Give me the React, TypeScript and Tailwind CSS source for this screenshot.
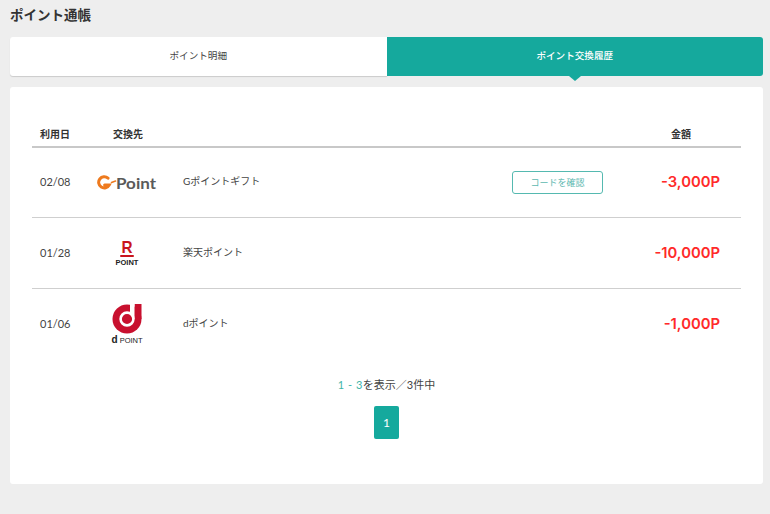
const font = "font-['Lato','Noto_Sans_CJK_JP',sans-serif]"

const GPointLogo = () => (
  <svg width="60" height="18" viewBox="0 0 60 18" aria-label="G-Point">
    <path d="M11 4.2A5.6 5.6 0 1 0 12.2 11H7.6" fill="none" stroke="#ee7a1e" strokeWidth="3" strokeLinecap="round" />
    <path d="M14.5 8.5l4-1.4" fill="none" stroke="#ee7a1e" strokeWidth="1.6" strokeLinecap="round" />
    <text x="19" y="15" fontFamily="Lato, sans-serif" fontWeight="700" fontSize="16" fill="#5a5a5a" textLength="40" lengthAdjust="spacingAndGlyphs">Point</text>
  </svg>
)

const RPointLogo = () => (
  <div className="flex flex-col items-center mt-[2px]">
    <span className="font-['Liberation_Sans'] font-bold text-[17px] leading-[15px] text-[#c9151e] scale-x-90">R</span>
    <div className="w-[14px] h-[2px] bg-[#c9151e] rounded-full" />
    <span className="font-['Liberation_Sans'] font-bold text-[7.5px] leading-[10px] text-[#222] mt-[1px]">POINT</span>
  </div>
)

const DPointLogo = () => (
  <div className="flex flex-col items-center mt-[1px]">
    <svg width="30" height="30" viewBox="0 0 30 30">
      <circle cx="15" cy="15" r="14.5" fill="#c8102e" />
      <rect x="22.5" y="0" width="7" height="15" fill="#c8102e" />
      <rect x="18" y="0" width="4.5" height="15" fill="#fff" />
      <circle cx="15" cy="15" r="6.4" fill="#c8102e" stroke="#fff" strokeWidth="2.6" />
      <circle cx="15" cy="15" r="3.4" fill="#c8102e" />
    </svg>
    <span className="font-['Liberation_Sans'] text-[7.5px] leading-[9px] text-[#222] mt-[1px]">
      <b className="text-[10px]">d</b> POINT
    </span>
  </div>
)

const rows = [
  { date: "02/08", logo: <GPointLogo />, name: "Gポイントギフト", amount: "-3,000P", code: true, rowClass: "h-[70px] border-b border-[#cfcfcf]" },
  { date: "01/28", logo: <RPointLogo />, name: "楽天ポイント", amount: "-10,000P", code: false, rowClass: "h-[71px] border-b border-[#cfcfcf]" },
  { date: "01/06", logo: <DPointLogo />, name: "dポイント", amount: "-1,000P", code: false, rowClass: "h-[70px]" },
]

export default function App() {
  return (
    <div className={`${font} w-[770px] h-[514px] bg-[#eeeeee] px-[10px] text-[#333] overflow-hidden`}>
      <h1 className="pt-[6px] h-[37px] text-[13.5px] leading-[18px] font-bold text-[#333]">ポイント通帳</h1>

      <div className="flex w-[753px] h-[39px] text-[9.6px] rounded-[3px]">
        <div className="flex-1 flex items-center justify-center bg-white rounded-l-[3px] shadow-[0_1px_1px_rgba(0,0,0,0.15)] text-[#444]">
          ポイント明細
        </div>
        <div className="relative flex-1 flex items-center justify-center bg-[#15a99d] rounded-r-[3px] text-white font-medium">
          ポイント交換履歴
          <div className="absolute left-1/2 -translate-x-1/2 top-full w-0 h-0 border-x-[6px] border-x-transparent border-t-[5px] border-t-[#15a99d]" />
        </div>
      </div>

      <div className="mt-[11px] w-[753px] h-[397px] bg-white rounded-[3px] px-[22px] pt-[38px]">
        <div className="flex items-center h-[23px] pb-[3px] text-[10px] font-bold text-[#333] border-b-2 border-[#c8c8c8]">
          <div className="w-[81px] pl-[8px]">利用日</div>
          <div className="flex-1">交換先</div>
          <div className="w-[70px] text-right pr-[51px] whitespace-nowrap">金額</div>
        </div>

        {rows.map((row) => (
          <div key={row.date} className={`flex items-center ${row.rowClass}`}>
            <div className="w-[60px] pl-[8px] text-[11px] text-[#444]">{row.date}</div>
            <div className="w-[70px] flex justify-center">{row.logo}</div>
            <div className="ml-[21px] pb-[2px] flex-1 text-[10px] text-[#444]">{row.name}</div>
            {row.code && (
              <button className="w-[91px] h-[23px] border border-[#55b9b0] rounded-[3px] text-[9px] text-[#5db8b0] mr-[38px]">
                コードを確認
              </button>
            )}
            <div className="w-[100px] pr-[21px] text-right text-[14.8px] font-['Inter'] font-semibold text-[#ff2a2a] whitespace-nowrap">{row.amount}</div>
          </div>
        ))}

        <p className="mt-[18px] text-center text-[11px] leading-[16px] text-[#444]">
          <span className="text-[#3fb5aa] tracking-[0.5px]">1 - 3</span>を表示／3件中
        </p>
        <div className="mt-[13px] flex justify-center">
          <div className="w-[25px] h-[33px] flex items-center justify-center bg-[#15a99d] rounded-[2px] text-white text-[12px]">1</div>
        </div>
      </div>
    </div>
  )
}
